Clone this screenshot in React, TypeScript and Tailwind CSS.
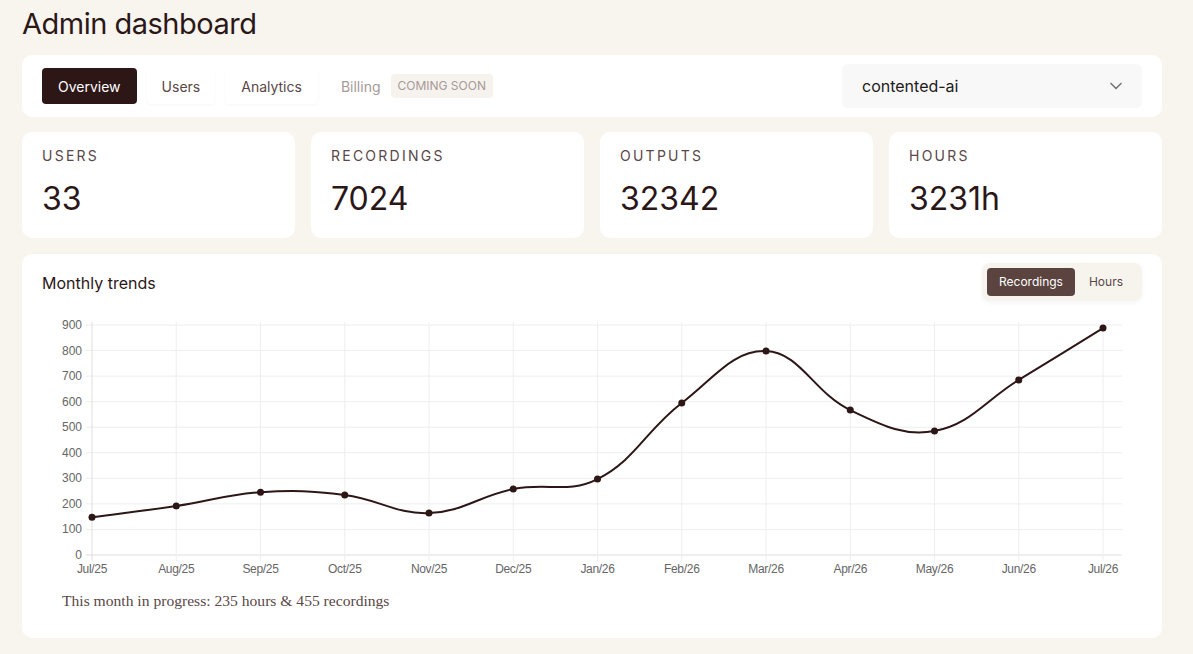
import { ChevronDown } from "lucide-react";

const stats = [
  { label: "Users", value: "33" },
  { label: "Recordings", value: "7024" },
  { label: "Outputs", value: "32342" },
  { label: "Hours", value: "3231h" },
];

const months = [
  "Jul/25", "Aug/25", "Sep/25", "Oct/25", "Nov/25", "Dec/25", "Jan/26",
  "Feb/26", "Mar/26", "Apr/26", "May/26", "Jun/26", "Jul/26",
];
const values = [148, 192, 246, 235, 164, 258, 297, 595, 798, 567, 485, 685, 888];

// chart geometry (svg coords)
const W = 1100;
const H = 270;
const left = 50;
const right = 1080;
const step = 84.25;
const top = 12;
const bottom = 242;
const yOf = (v: number) => bottom - (v / 900) * (bottom - top);
const xOf = (i: number) => left + i * step;

type P = { x: number; y: number };

function spline(prev: P, cur: P, next: P, t: number) {
  const d01 = Math.hypot(cur.x - prev.x, cur.y - prev.y);
  const d12 = Math.hypot(next.x - cur.x, next.y - cur.y);
  const s01 = d01 + d12 === 0 ? 0 : d01 / (d01 + d12);
  const s12 = d01 + d12 === 0 ? 0 : d12 / (d01 + d12);
  const fa = t * s01;
  const fb = t * s12;
  return {
    prev: { x: cur.x - fa * (next.x - prev.x), y: cur.y - fa * (next.y - prev.y) },
    next: { x: cur.x + fb * (next.x - prev.x), y: cur.y + fb * (next.y - prev.y) },
  };
}

function linePath() {
  const pts = values.map((v, i) => ({ x: xOf(i), y: yOf(v) }));
  const ctrl = pts.map((p, i) =>
    spline(pts[i - 1] ?? p, p, pts[i + 1] ?? p, 0.4)
  );
  let d = `M${pts[0].x},${pts[0].y}`;
  for (let i = 1; i < pts.length; i++) {
    const a = ctrl[i - 1].next;
    const b = ctrl[i].prev;
    d += ` C${a.x},${a.y} ${b.x},${b.y} ${pts[i].x},${pts[i].y}`;
  }
  return d;
}

function TrendChart() {
  const ticks = [0, 100, 200, 300, 400, 500, 600, 700, 800, 900];
  return (
    <svg width={W} height={H} viewBox={`0 0 ${W} ${H}`} className="block">
      {ticks.map((t) => (
        <g key={t}>
          <line
            x1={left - 6}
            x2={right}
            y1={yOf(t)}
            y2={yOf(t)}
            stroke={t === 0 ? "#dedede" : "#eeeeee"}
            strokeWidth={1}
          />
          <text
            x={left - 10}
            y={yOf(t) + 4}
            textAnchor="end"
            fontSize={12}
            fill="#666"
            fontFamily="Liberation Sans, Arial, sans-serif"
          >
            {t}
          </text>
        </g>
      ))}
      {months.map((m, i) => (
        <g key={m}>
          <line
            x1={xOf(i)}
            x2={xOf(i)}
            y1={9}
            y2={bottom + 6}
            stroke={i === 0 ? "#dedede" : "#eeeeee"}
            strokeWidth={1}
          />
          <text
            x={xOf(i)}
            y={bottom + 18}
            textAnchor="middle"
            fontSize={12}
            fill="#666"
            fontFamily="Liberation Sans, Arial, sans-serif"
            letterSpacing="-0.3"
          >
            {m}
          </text>
        </g>
      ))}
      <path d={linePath()} fill="none" stroke="#2d1616" strokeWidth={2} />
      {values.map((v, i) => (
        <circle key={i} cx={xOf(i)} cy={yOf(v)} r={3.5} fill="#2d1616" />
      ))}
    </svg>
  );
}

export default function App() {
  return (
    <div
      className="min-h-screen bg-[#f8f5ef] px-[22px] pt-[6px] text-[#2b1718]"
      style={{ fontFamily: "Inter, 'Noto Sans', sans-serif" }}
    >
      <div className="w-[1140px]">
        <h1 className="text-[29px] leading-[36px] tracking-[-0.5px] mb-[13px]">Admin dashboard</h1>

        <div className="flex items-center justify-between rounded-[10px] bg-white px-5 h-[62px]">
          <div className="flex items-center gap-[10px]">
            <button className="h-9 rounded-[4px] bg-[#2d1616] px-4 text-[14px] text-white">
              Overview
            </button>
            <button className="h-9 rounded-[4px] px-[15px] text-[14px] text-[#5a4747] shadow-[0_1px_3px_rgba(60,30,20,0.035)]">
              Users
            </button>
            <button className="h-9 rounded-[4px] px-4 text-[14px] text-[#5a4747] shadow-[0_1px_3px_rgba(60,30,20,0.035)]">
              Analytics
            </button>
            <div className="flex items-center gap-[10px] pl-[13px]">
              <span className="text-[14px] text-[#a59a98]">Billing</span>
              <span className="rounded-[4px] bg-[#f6f3ee] px-[7px] py-[5px] text-[12px] leading-[14px] text-[#a59a98]">
                COMING SOON
              </span>
            </div>
          </div>
          <div className="flex h-[44px] w-[300px] items-center justify-between rounded-[6px] bg-[#f8f8f8] pl-5 pr-4">
            <span className="text-[16px] text-[#231a1a]">contented-ai</span>
            <ChevronDown className="h-5 w-5 text-[#777]" strokeWidth={2} />
          </div>
        </div>

        <div className="mt-[15px] grid grid-cols-4 gap-4">
          {stats.map((s) => (
            <div key={s.label} className="h-[106px] rounded-[10px] bg-white px-5 pt-[13px]">
              <div className="text-[14px] uppercase tracking-[0.16em] text-[#5a4747]">{s.label}</div>
              <div className="mt-[13px] text-[32px] leading-[40px]">{s.value}</div>
            </div>
          ))}
        </div>

        <div className="mt-4 rounded-[10px] bg-white px-5 pt-[9px] pb-[26px]">
          <div className="flex items-center justify-between">
            <h2 className="pt-[1px] text-[16px]">Monthly trends</h2>
            <div className="flex items-center rounded-[8px] bg-[#f7f4ee] p-[5px] shadow-[0_2px_6px_rgba(60,30,20,0.04)]">
              <button className="h-7 rounded-[4px] bg-[#5b4340] px-3 text-[12px] text-white">
                Recordings
              </button>
              <button className="h-7 px-[14px] text-[12px] text-[#5a4747]">Hours</button>
            </div>
          </div>
          <div className="mt-[12px]">
            <TrendChart />
          </div>
          <p
            className="mt-[6px] pl-5 text-[15.6px] text-[#5a4747]"
            style={{ fontFamily: "'Liberation Serif', 'DejaVu Serif', serif" }}
          >
            This month in progress: 235 hours &amp; 455 recordings
          </p>
        </div>

        <div className="mt-4 h-[200px] rounded-[10px] bg-white" />
      </div>
    </div>
  );
}
